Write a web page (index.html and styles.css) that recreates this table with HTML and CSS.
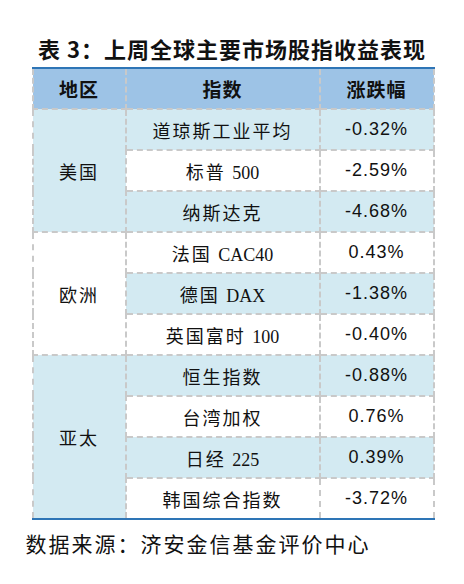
FILE: index.html
```html
<!DOCTYPE html>
<html lang="zh-CN">
<head>
    <meta charset="UTF-8">
    <title>表 3：上周全球主要市场股指收益表现</title>
    <link rel="stylesheet" href="styles.css">
</head>
<body>
    <div class="page">
        <h1 class="title">表 3：上周全球主要市场股指收益表现</h1>

        <table class="index-table">
            <colgroup>
                <col class="col-region">
                <col class="col-name">
                <col class="col-change">
            </colgroup>
            <thead>
                <tr>
                    <th>地区</th>
                    <th>指数</th>
                    <th>涨跌幅</th>
                </tr>
            </thead>
            <tbody>
                <tr class="tint">
                    <td class="region" rowspan="3">美国</td>
                    <td class="name">道琼斯工业平均</td>
                    <td class="change">-0.32%</td>
                </tr>
                <tr>
                    <td class="name">标普 <span class="latin">500</span></td>
                    <td class="change">-2.59%</td>
                </tr>
                <tr class="tint">
                    <td class="name">纳斯达克</td>
                    <td class="change">-4.68%</td>
                </tr>

                <tr class="plain">
                    <td class="region" rowspan="3">欧洲</td>
                    <td class="name">法国 <span class="latin">CAC40</span></td>
                    <td class="change">0.43%</td>
                </tr>
                <tr class="tint">
                    <td class="name">德国 <span class="latin">DAX</span></td>
                    <td class="change">-1.38%</td>
                </tr>
                <tr>
                    <td class="name">英国富时 <span class="latin">100</span></td>
                    <td class="change">-0.40%</td>
                </tr>

                <tr class="tint">
                    <td class="region last-region" rowspan="4">亚太</td>
                    <td class="name">恒生指数</td>
                    <td class="change">-0.88%</td>
                </tr>
                <tr>
                    <td class="name">台湾加权</td>
                    <td class="change">0.76%</td>
                </tr>
                <tr class="tint">
                    <td class="name">日经 <span class="latin">225</span></td>
                    <td class="change">0.39%</td>
                </tr>
                <tr class="last">
                    <td class="name">韩国综合指数</td>
                    <td class="change">-3.72%</td>
                </tr>
            </tbody>
        </table>

        <p class="source">数据来源：济安金信基金评价中心</p>
    </div>
</body>
</html>
```

FILE: styles.css
```css
body {
    margin: 0;
    background-color: #ffffff;
    color: #111111;
    font-family: "Liberation Serif", "Noto Sans CJK SC", serif;
}

.page {
    width: 401px;
    margin: 0 auto;
    padding-top: 33px;
}

.title {
    margin: 0 -20px;
    font-family: "Noto Sans CJK SC", sans-serif;
    font-size: 22px;
    font-weight: 700;
    line-height: 30px;
    letter-spacing: 1px;
    text-align: center;
}

.index-table {
    width: 401px;
    margin-top: 4px;
    border-collapse: collapse;
    table-layout: fixed;
}

.col-region {
    width: 93px;
}

.col-name {
    width: 194px;
}

.col-change {
    width: 114px;
}

.index-table th,
.index-table td {
    height: 39px;
    padding: 0;
    border: 2px dashed #c9c9c9;
    text-align: center;
    vertical-align: middle;
}

.index-table th {
    border-top: 2px solid #2e75b6;
    background-color: #9dc3e6;
    font-family: "Noto Sans CJK SC", sans-serif;
    font-size: 19px;
    font-weight: 700;
    letter-spacing: 1px;
}

.index-table td {
    font-size: 18px;
    font-weight: 400;
    letter-spacing: 2px;
}

.index-table .latin {
    letter-spacing: 0;
}

.index-table .region {
    font-family: "Noto Sans CJK SC", sans-serif;
    background-color: #d3eaf2;
}

.index-table .plain .region {
    background-color: #ffffff;
}

.index-table .change {
    font-family: "Liberation Sans", "Noto Sans CJK SC", sans-serif;
    letter-spacing: 1px;
}

.tint td {
    background-color: #d3eaf2;
}

.index-table .last td,
.index-table .last-region {
    border-bottom: 2px solid #2e75b6;
}

.source {
    margin: 9px 0 0 -6px;
    font-family: "Noto Sans CJK SC", sans-serif;
    font-size: 21px;
    line-height: 28px;
    letter-spacing: 2px;
}
```
